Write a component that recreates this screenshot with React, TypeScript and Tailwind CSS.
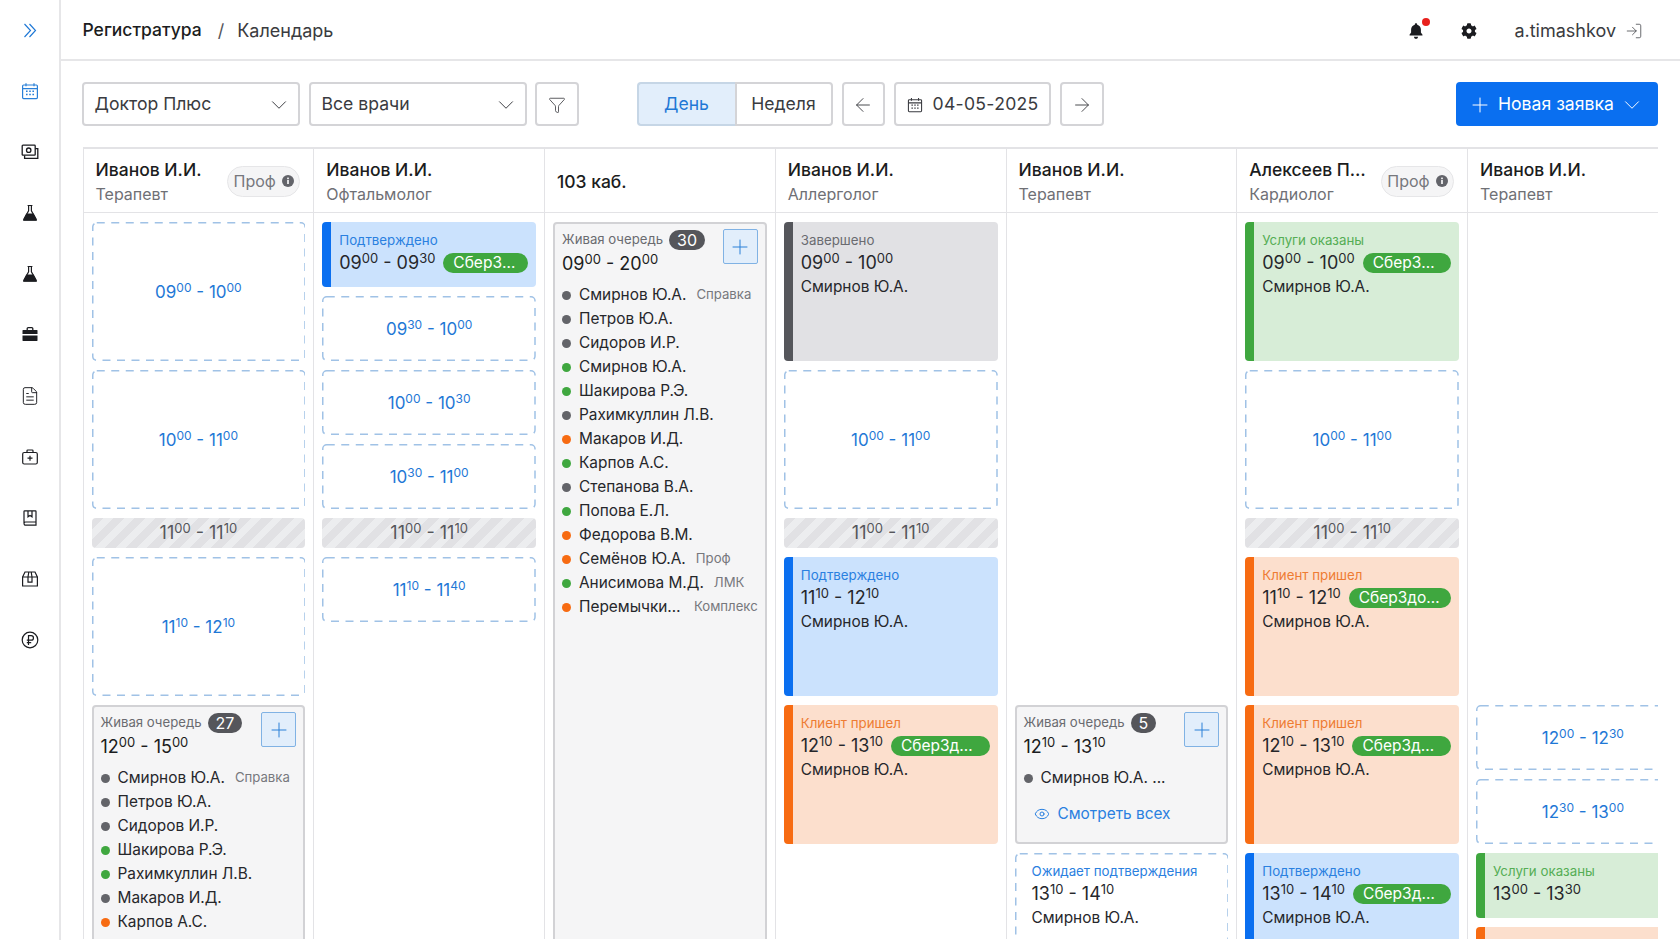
import { ChevronDown, ArrowLeft, ArrowRight, Plus, Funnel, Eye, LogIn, FileText } from 'lucide-react'
import { FaCog } from 'react-icons/fa'
import type { ReactNode } from 'react'

type Tone = 'blue' | 'green' | 'orange' | 'gray'
type QueueItem = { name: string; color: 'gray' | 'green' | 'orange'; tag?: string }
type Block =
  | { kind: 'free'; time: string; h: string }
  | { kind: 'break'; time: string }
  | { kind: 'spacer'; h: string }
  | { kind: 'card'; tone: Tone; status: string; time: string; h: string; name?: string; badge?: string }
  | { kind: 'pending'; status: string; time: string; h: string; name: string }
  | { kind: 'queue'; count: number; time: string; h: string; items: QueueItem[]; more?: boolean }

type Column = { name: string; sub?: string; prof?: boolean; blocks: Block[] }

const HOUR = 'h-[139px]'
const HALF = 'h-[65px]'

const toneClass: Record<Tone, { box: string; label: string }> = {
  blue: { box: 'bg-[#cbe2fd] border-[#0a6ff0]', label: 'text-[#2a80e0]' },
  green: { box: 'bg-[#d7edd7] border-[#3fa73f]', label: 'text-[#55ad55]' },
  orange: { box: 'bg-[#fcdfcd] border-[#f76b12]', label: 'text-[#ee7c33]' },
  gray: { box: 'bg-[#e1e1e4] border-[#55565b]', label: 'text-[#6a6b70]' },
}

const dotClass = { gray: 'bg-[#636469]', green: 'bg-[#3fa73f]', orange: 'bg-[#f76b12]' }

const columns: Column[] = [
  {
    name: 'Иванов И.И.',
    sub: 'Терапевт',
    prof: true,
    blocks: [
      { kind: 'free', time: '09:00-10:00', h: HOUR },
      { kind: 'free', time: '10:00-11:00', h: HOUR },
      { kind: 'break', time: '11:00-11:10' },
      { kind: 'free', time: '11:10-12:10', h: HOUR },
      {
        kind: 'queue',
        count: 27,
        time: '12:00-15:00',
        h: 'h-[420px]',
        items: [
          { name: 'Смирнов Ю.А.', color: 'gray', tag: 'Справка' },
          { name: 'Петров Ю.А.', color: 'gray' },
          { name: 'Сидоров И.Р.', color: 'gray' },
          { name: 'Шакирова Р.Э.', color: 'green' },
          { name: 'Рахимкуллин Л.В.', color: 'green' },
          { name: 'Макаров И.Д.', color: 'gray' },
          { name: 'Карпов А.С.', color: 'orange' },
          { name: 'Степанова В.А.', color: 'gray' },
        ],
      },
    ],
  },
  {
    name: 'Иванов И.И.',
    sub: 'Офтальмолог',
    blocks: [
      { kind: 'card', tone: 'blue', status: 'Подтверждено', time: '09:00-09:30', h: HALF, badge: 'СберЗдоровье' },
      { kind: 'free', time: '09:30-10:00', h: HALF },
      { kind: 'free', time: '10:00-10:30', h: HALF },
      { kind: 'free', time: '10:30-11:00', h: HALF },
      { kind: 'break', time: '11:00-11:10' },
      { kind: 'free', time: '11:10-11:40', h: HALF },
    ],
  },
  {
    name: '103 каб.',
    blocks: [
      {
        kind: 'queue',
        count: 30,
        time: '09:00-20:00',
        h: 'h-[900px]',
        items: [
          { name: 'Смирнов Ю.А.', color: 'gray', tag: 'Справка' },
          { name: 'Петров Ю.А.', color: 'gray' },
          { name: 'Сидоров И.Р.', color: 'gray' },
          { name: 'Смирнов Ю.А.', color: 'green' },
          { name: 'Шакирова Р.Э.', color: 'green' },
          { name: 'Рахимкуллин Л.В.', color: 'gray' },
          { name: 'Макаров И.Д.', color: 'orange' },
          { name: 'Карпов А.С.', color: 'green' },
          { name: 'Степанова В.А.', color: 'gray' },
          { name: 'Попова Е.Л.', color: 'green' },
          { name: 'Федорова В.М.', color: 'orange' },
          { name: 'Семёнов Ю.А.', color: 'orange', tag: 'Проф' },
          { name: 'Анисимова М.Д.', color: 'green', tag: 'ЛМК' },
          { name: 'Перемычкина А.А.', color: 'orange', tag: 'Комплекс' },
        ],
      },
    ],
  },
  {
    name: 'Иванов И.И.',
    sub: 'Аллерголог',
    blocks: [
      { kind: 'card', tone: 'gray', status: 'Завершено', time: '09:00-10:00', h: HOUR, name: 'Смирнов Ю.А.' },
      { kind: 'free', time: '10:00-11:00', h: HOUR },
      { kind: 'break', time: '11:00-11:10' },
      { kind: 'card', tone: 'blue', status: 'Подтверждено', time: '11:10-12:10', h: HOUR, name: 'Смирнов Ю.А.' },
      { kind: 'card', tone: 'orange', status: 'Клиент пришел', time: '12:10-13:10', h: HOUR, name: 'Смирнов Ю.А.', badge: 'СберЗдоровье' },
    ],
  },
  {
    name: 'Иванов И.И.',
    sub: 'Терапевт',
    blocks: [
      { kind: 'spacer', h: 'h-[474px]' },
      { kind: 'queue', count: 5, time: '12:10-13:10', h: HOUR, items: [{ name: 'Смирнов Ю.А. ...', color: 'gray' }], more: true },
      { kind: 'pending', status: 'Ожидает подтверждения', time: '13:10-14:10', h: HOUR, name: 'Смирнов Ю.А.' },
    ],
  },
  {
    name: 'Алексеев Петр Иванович',
    sub: 'Кардиолог',
    prof: true,
    blocks: [
      { kind: 'card', tone: 'green', status: 'Услуги оказаны', time: '09:00-10:00', h: HOUR, name: 'Смирнов Ю.А.', badge: 'СберЗдоровье' },
      { kind: 'free', time: '10:00-11:00', h: HOUR },
      { kind: 'break', time: '11:00-11:10' },
      { kind: 'card', tone: 'orange', status: 'Клиент пришел', time: '11:10-12:10', h: HOUR, name: 'Смирнов Ю.А.', badge: 'СберЗдоровье' },
      { kind: 'card', tone: 'orange', status: 'Клиент пришел', time: '12:10-13:10', h: HOUR, name: 'Смирнов Ю.А.', badge: 'СберЗдоровье' },
      { kind: 'card', tone: 'blue', status: 'Подтверждено', time: '13:10-14:10', h: HOUR, name: 'Смирнов Ю.А.', badge: 'СберЗдоровье' },
    ],
  },
  {
    name: 'Иванов И.И.',
    sub: 'Терапевт',
    blocks: [
      { kind: 'spacer', h: 'h-[474px]' },
      { kind: 'free', time: '12:00-12:30', h: HALF },
      { kind: 'free', time: '12:30-13:00', h: HALF },
      { kind: 'card', tone: 'green', status: 'Услуги оказаны', time: '13:00-13:30', h: HALF },
      { kind: 'card', tone: 'orange', status: 'Клиент пришел', time: '13:30-14:00', h: HALF },
    ],
  },
]

function Time({ value, small = false }: { value: string; small?: boolean }) {
  const [from, to] = value.split('-')
  const [h1, m1] = from.split(':')
  const [h2, m2] = to.split(':')
  const sup = small ? 'text-[12px]' : 'text-[13px]'
  return (
    <span className={`whitespace-nowrap leading-[26px] ${small ? 'text-[17px]' : 'text-[18px]'}`}>
      {h1}
      <sup className={sup}>{m1}</sup> - {h2}
      <sup className={sup}>{m2}</sup>
    </span>
  )
}

function DashedFrame() {
  return (
    <svg className="pointer-events-none absolute inset-0 h-full w-full">
      <rect
        x="0.75"
        y="0.75"
        rx="4"
        className="h-[calc(100%-1.5px)] w-[calc(100%-1.5px)]"
        fill="none"
        stroke="#a0c2e6"
        strokeWidth="1.5"
        strokeDasharray="8 6.5"
      />
    </svg>
  )
}

function Badge({ text }: { text: string }) {
  return (
    <span className="ml-2 h-5 min-w-0 flex-1 truncate rounded-full bg-[#3fa73f] px-[10px] text-center text-[15.5px] leading-5 text-white">
      {text}
    </span>
  )
}

function PlusBox() {
  return (
    <span className="flex h-[35px] w-[35px] shrink-0 items-center justify-center rounded-[2px] border border-[#80b2e4] bg-[#e2eefb] text-[#2a80d8]">
      <Plus size={24} strokeWidth={1} />
    </span>
  )
}

function QueueCard({ block }: { block: Extract<Block, { kind: 'queue' }> }) {
  return (
    <div className={`${block.h} shrink-0 overflow-hidden rounded-[4px] border-2 border-[#d2d2d5] bg-[#f5f5f6] py-[5px] pl-[7px] pr-[7px]`}>
      <div className="flex items-start justify-between">
        <div>
          <div className="flex h-[22px] items-center">
            <span className="text-[13.2px] text-[#6a6b70]">Живая очередь</span>
            <span className="ml-[6px] h-5 rounded-full bg-[#55565b] px-2 text-[16px] leading-5 text-white">{block.count}</span>
          </div>
          <Time value={block.time} />
        </div>
        <PlusBox />
      </div>
      <div className="mt-[6px]">
        {block.items.map((item, i) => (
          <div key={i} className="flex h-6 items-center">
            <span className={`h-[9px] w-[9px] shrink-0 rounded-full ${dotClass[item.color]}`} />
            <span className="ml-2 min-w-0 truncate text-[15.4px] text-[#26272b]">{item.name}</span>
            {item.tag && <span className="ml-[10px] shrink-0 text-[13.2px] text-[#77787d]">{item.tag}</span>}
          </div>
        ))}
      </div>
      {block.more && (
        <div className="mt-[12px] flex items-center pl-[10px] text-[15.4px] text-[#2a80e0]">
          <Eye size={16} strokeWidth={1.5} />
          <span className="ml-2">Смотреть всех</span>
        </div>
      )}
    </div>
  )
}

function Slot({ block }: { block: Block }) {
  switch (block.kind) {
    case 'spacer':
      return <div className={`${block.h} shrink-0`} />
    case 'free':
      return (
        <div className={`relative flex ${block.h} shrink-0 items-center justify-center pt-px text-[#1f78d6]`}>
          <DashedFrame />
          <Time value={block.time} small />
        </div>
      )
    case 'break':
      return (
        <div className="flex h-[30px] shrink-0 items-center justify-center rounded-[4px] bg-[repeating-linear-gradient(135deg,#e1e1e4_0,#e1e1e4_8px,#ecedef_8px,#ecedef_15px)] text-[#55565b]">
          <Time value={block.time} />
        </div>
      )
    case 'card': {
      const tone = toneClass[block.tone]
      return (
        <div className={`${block.h} shrink-0 overflow-hidden rounded-[4px] border-l-[9px] pl-2 pr-2 pt-2 text-[#26272b] ${tone.box}`}>
          <div className={`text-[13.3px] leading-5 ${tone.label}`}>{block.status}</div>
          <div className="flex items-center">
            <Time value={block.time} />
            {block.badge && <Badge text={block.badge} />}
          </div>
          {block.name && <div className="text-[15.4px] leading-[22px]">{block.name}</div>}
        </div>
      )
    }
    case 'pending':
      return (
        <div className={`relative ${block.h} shrink-0 pl-[17px] pt-2 text-[#26272b]`}>
          <DashedFrame />
          <div className="text-[13.3px] leading-5 text-[#2a80e0]">{block.status}</div>
          <div className="flex items-center">
            <Time value={block.time} />
          </div>
          <div className="text-[15.4px] leading-[22px]">{block.name}</div>
        </div>
      )
    case 'queue':
      return <QueueCard block={block} />
  }
}

function ColumnView({ column }: { column: Column }) {
  return (
    <div className="w-[230.75px] shrink-0 border-l border-[#e3e3e6]">
      <div className="flex h-[64px] items-center border-b border-[#e3e3e6] pl-3 pr-[13px] pt-px">
        <div className="min-w-0 flex-1">
          <div className="mt-px truncate text-[17.5px] font-medium leading-[26px] text-[#1b1c20]">{column.name}</div>
          {column.sub && <div className="text-[16px] leading-[23px] text-[#6f7075]">{column.sub}</div>}
        </div>
        {column.prof && (
          <span className="ml-2 flex h-[31px] w-[73px] shrink-0 items-center justify-center gap-[6px] rounded-full border border-[#e6e6e8] bg-[#f5f5f6] text-[16px] text-[#77787d]">
            Проф
            <InfoDot />
          </span>
        )}
      </div>
      <div className="flex flex-col gap-[9px] px-2 pt-[9px]">
        {column.blocks.map((block, i) => (
          <Slot key={i} block={block} />
        ))}
      </div>
    </div>
  )
}

function InfoDot() {
  return (
    <svg width="12" height="12" viewBox="0 0 12 12">
      <circle cx="6" cy="6" r="6" fill="#63646a" />
      <rect x="5.2" y="5" width="1.6" height="4" fill="#fff" />
      <rect x="5.2" y="2.6" width="1.6" height="1.6" fill="#fff" />
    </svg>
  )
}

function Outlined({ children, className = '' }: { children: ReactNode; className?: string }) {
  return (
    <div className={`flex h-[44px] items-center rounded-[4px] border-2 border-[#d4d4d7] pt-px text-[17.6px] text-[#3a3b40] ${className}`}>
      {children}
    </div>
  )
}

function SelectBox({ label }: { label: string }) {
  return (
    <Outlined className="w-[218px] justify-between pl-[11px] pr-[6px]">
      {label}
      <ChevronDown size={26} strokeWidth={0.9} />
    </Outlined>
  )
}

function CalendarIcon({ color, size = 18 }: { color: string; size?: number }) {
  return (
    <svg width={size} height={size} viewBox="0 0 18 18" fill="none" stroke={color} strokeWidth="1.2">
      <rect x="1.6" y="3" width="14.8" height="13.6" rx="1" />
      <path d="M1.6 6.6h14.8M5 1.2v3M13 1.2v3" />
      <path d="M5 9.2h1.6M8.2 9.2h1.6M11.4 9.2h1.6M5 12.6h1.6M8.2 12.6h1.6M11.4 12.6h1.6" strokeWidth="1.5" />
    </svg>
  )
}

function Flask() {
  return (
    <svg width="18" height="18" viewBox="0 0 18 18">
      <path d="M6.6 1.500h4.800M7.600 1.500v5.300L2.800 15.300c-.3.500 0 .9.500.9h11.400c.5 0 .8-.4.500-.9L10.400 6.800V1.500" fill="none" stroke="#1b1c20" strokeWidth="1.200" />
      <path d="M5.300 9.600h7.400l3.300 7H2z" fill="#1b1c20" />
    </svg>
  )
}

const navIcons: ReactNode[] = [
  <svg width="14" height="15" viewBox="0 0 14 15" fill="none" stroke="#1f78d6" strokeWidth="1.15">
    <path d="M1.500 1l6 6.500-6 6.500M6.500 1l6 6.500-6 6.500" />
  </svg>,
  <CalendarIcon color="#2a80d8" />,
  <svg width="18" height="18" viewBox="0 0 18 18" fill="none" stroke="#1b1c20" strokeWidth="1.3">
    <rect x="1.200" y="2.200" width="13" height="10" rx=".8" />
    <circle cx="7.700" cy="7.200" r="2.200" />
    <path d="M3.600 12.400v3h13.200V5.600h-2.600" />
  </svg>,
  <Flask />,
  <Flask />,
  <svg width="18" height="18" viewBox="0 0 18 18">
    <path d="M6.200 4V2.600c0-.6.4-1 1-1h3.600c.6 0 1 .4 1 1V4" fill="none" stroke="#1b1c20" strokeWidth="1.3" />
    <path d="M2 4h14c.3 0 .5.2.5.5v3.600h-15V4.500c0-.3.2-.5.5-.5zM1.500 9.400h15v5.100c0 .3-.2.500-.500.500H2c-.3 0-.500-.2-.500-.500z" fill="#1b1c20" />
  </svg>,
  <FileText size={20} strokeWidth={1.15} className="text-[#1b1c20]" />,
  <svg width="18" height="18" viewBox="0 0 18 18" fill="none" stroke="#1b1c20" strokeWidth="1.2">
    <rect x="1.700" y="4.500" width="14.600" height="11.500" rx="1.500" />
    <path d="M6 4.500V2.800c0-.5.4-.8.800-.8h4.400c.4 0 .8.300.8.800v1.700M9 7.700v5M6.500 10.200h5" />
  </svg>,
  <svg width="18" height="18" viewBox="0 0 18 18" fill="none" stroke="#1b1c20" strokeWidth="1.2">
    <path d="M3 14V2.600c0-.4.300-.7.700-.7h10.800c.3 0 .5.200.5.500V16.200H4.600C3.700 16.200 3 15.500 3 14.600c0-.9.700-1.600 1.600-1.600H15" />
    <path d="M7 2v5.800l2-1.400 2 1.400V2" />
  </svg>,
  <svg width="18" height="18" viewBox="0 0 18 18" fill="none" stroke="#1b1c20" strokeWidth="1.2">
    <path d="M1.600 7h14.800v9H1.600zM1.600 7l2.400-5h10l2.400 5M7 7l.8-5M11 7l-.8-5M7 7v5.200h4V7" />
  </svg>,
  <svg width="18" height="18" viewBox="0 0 18 18" fill="none" stroke="#1b1c20" strokeWidth="1.200">
    <circle cx="9" cy="9" r="7.800" />
    <path d="M7.500 14V4.700h2.700a2.200 2.200 0 0 1 0 4.500H5.800M5.800 11.600h4.400" />
  </svg>,
]

export default function App() {
  return (
    <div className="flex h-[940px] w-[1680px] overflow-hidden bg-white font-['Inter',sans-serif] text-[#1b1c20]">
      <aside className="flex w-[60.5px] shrink-0 flex-col items-center gap-[41px] border-r-2 border-[#e6e6e8] pl-[2px] pt-[20px]">
        {navIcons.map((icon, i) => (
          <span key={i} className="flex h-5 w-5 items-center justify-center">
            {icon}
          </span>
        ))}
      </aside>

      <main className="flex min-w-0 flex-1 flex-col">
        <header className="flex h-[61px] shrink-0 items-center border-b-2 border-[#e6e6e8] pl-[22px] pr-[37px] pt-[2px] text-[18px]">
          <span className="text-[17.5px] font-medium text-[#1b1c20]">Регистратура</span>
          <span className="ml-[16px] text-[#55565b]">/</span>
          <span className="ml-[13px] text-[#3a3b40]">Календарь</span>
          <div className="ml-auto flex items-center">
            <span className="relative">
              <svg width="18" height="18" viewBox="0 0 18 18" fill="#1b1c20">
                <path d="M9 1.200c.7 0 1.200.5 1.200 1.100v.5c2.300.6 3.700 2.500 3.700 4.800v2.900l1.600 2.300c.2.400 0 .8-.4.800H2.900c-.4 0-.6-.4-.4-.8l1.600-2.300V7.600c0-2.300 1.400-4.200 3.700-4.800v-.5c0-.6.500-1.100 1.200-1.100zM6.900 14.800h4.200a2.100 2.100 0 0 1-4.200 0z" />
              </svg>
              <span className="absolute -right-[5px] -top-[4px] h-2 w-2 rounded-full bg-[#e8211d]" />
            </span>
            <FaCog size={16} className="ml-[36px] text-[#1b1c20]" />
            <span className="ml-[37px] text-[#3a3b40]">a.timashkov</span>
            <LogIn size={18} strokeWidth={1} className="ml-[9px] text-[#3a3b40]" />
          </div>
        </header>

        <div className="flex flex-col pl-[22px] pr-[22px] pt-[21px]">
          <div className="-ml-px flex h-[44px] items-center">
            <SelectBox label="Доктор Плюс" />
            <div className="w-[9px]" />
            <SelectBox label="Все врачи" />
            <Outlined className="ml-[8px] w-[44px] justify-center">
              <Funnel size={18} strokeWidth={1.1} />
            </Outlined>
            <div className="ml-[58px] flex h-[44px]">
              <div className="flex w-[98px] items-center justify-center rounded-l-[4px] border-2 border-r-0 border-[#c6d6e6] bg-[#e2eefb] pt-px text-[17.6px] text-[#1f78d6]">День</div>
              <div className="flex w-[98px] items-center justify-center rounded-r-[4px] border-2 border-[#d4d4d7] pt-px text-[17.6px] text-[#3a3b40]">Неделя</div>
            </div>
            <Outlined className="ml-[9px] w-[43px] justify-center">
              <ArrowLeft size={22} strokeWidth={1} />
            </Outlined>
            <Outlined className="ml-[9px] w-[157px] pl-[11px]">
              <CalendarIcon color="#3a3b40" size={16} />
              <span className="ml-[10px] tracking-[0.3px]">04-05-2025</span>
            </Outlined>
            <Outlined className="ml-[9px] w-[44px] justify-center">
              <ArrowRight size={22} strokeWidth={1} />
            </Outlined>
            <button className="ml-auto flex h-[44px] w-[202px] items-center rounded-[4px] bg-[#0a6ff0] pl-[12px] pt-px text-[17.6px] text-white">
              <Plus size={24} strokeWidth={1} />
              <span className="ml-[6px]">Новая заявка</span>
              <ChevronDown size={26} strokeWidth={0.9} className="ml-[5px]" />
            </button>
          </div>

          <div className="mt-[21px] flex h-[792px] overflow-hidden border-t-2 border-[#e3e3e6]">
            {columns.map((column, i) => (
              <ColumnView key={i} column={column} />
            ))}
          </div>
        </div>
      </main>
    </div>
  )
}
